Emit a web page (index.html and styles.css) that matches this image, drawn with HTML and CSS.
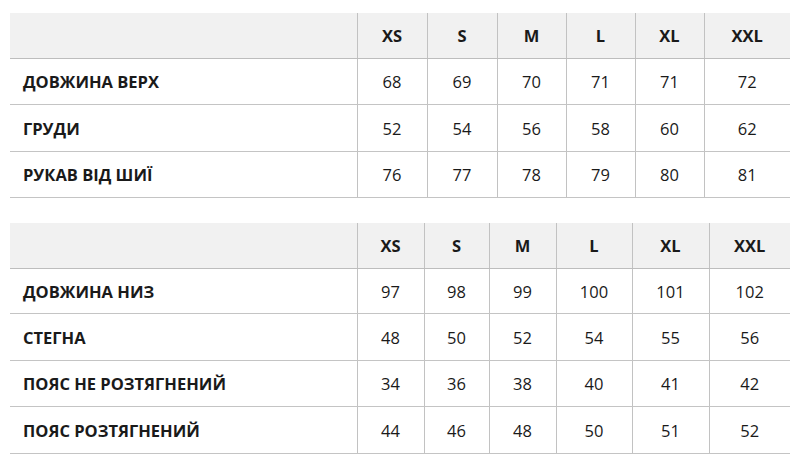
FILE: index.html
```html
<!DOCTYPE html>
<html lang="uk">
<head>
<meta charset="utf-8">
<title>Розмірна сітка</title>
<link rel="stylesheet" href="styles.css">
</head>
<body>
<div class="page">
  <table class="sizes sizes-top">
    <colgroup>
      <col class="c-label"><col class="c1"><col class="c2"><col class="c3"><col class="c4"><col class="c5"><col class="c6">
    </colgroup>
    <thead>
      <tr><th></th><th>XS</th><th>S</th><th>M</th><th>L</th><th>XL</th><th>XXL</th></tr>
    </thead>
    <tbody>
      <tr class="r-short"><td class="label">ДОВЖИНА ВЕРХ</td><td>68</td><td>69</td><td>70</td><td>71</td><td>71</td><td>72</td></tr>
      <tr class="r-tall"><td class="label">ГРУДИ</td><td>52</td><td>54</td><td>56</td><td>58</td><td>60</td><td>62</td></tr>
      <tr class="r-short"><td class="label">РУКАВ ВІД ШИЇ</td><td>76</td><td>77</td><td>78</td><td>79</td><td>80</td><td>81</td></tr>
    </tbody>
  </table>

  <table class="sizes sizes-bottom">
    <colgroup>
      <col class="c-label"><col class="c1"><col class="c2"><col class="c3"><col class="c4"><col class="c5"><col class="c6">
    </colgroup>
    <thead>
      <tr><th></th><th>XS</th><th>S</th><th>M</th><th>L</th><th>XL</th><th>XXL</th></tr>
    </thead>
    <tbody>
      <tr class="r-min"><td class="label">ДОВЖИНА НИЗ</td><td>97</td><td>98</td><td>99</td><td>100</td><td>101</td><td>102</td></tr>
      <tr class="r-tall"><td class="label">СТЕГНА</td><td>48</td><td>50</td><td>52</td><td>54</td><td>55</td><td>56</td></tr>
      <tr class="r-short"><td class="label">ПОЯС НЕ РОЗТЯГНЕНИЙ</td><td>34</td><td>36</td><td>38</td><td>40</td><td>41</td><td>42</td></tr>
      <tr class="r-tall"><td class="label">ПОЯС РОЗТЯГНЕНИЙ</td><td>44</td><td>46</td><td>48</td><td>50</td><td>51</td><td>52</td></tr>
    </tbody>
  </table>
</div>
</body>
</html>
```

FILE: styles.css
```css
html, body {
  margin: 0;
  padding: 0;
  background: #ffffff;
}

.page {
  padding: 13px 10px 0 10px;
  display: flex;
  flex-direction: column;
  gap: 25px;
  font-family: "Open Sans", "Noto Sans", "Liberation Sans", sans-serif;
  color: #1a1a1a;
}

.sizes {
  width: 780px;
  border-collapse: collapse;
  table-layout: fixed;
  font-size: 16.5px;
}

.c-label { width: 347px; }

.sizes-top .c1 { width: 70px; }
.sizes-top .c2 { width: 70px; }
.sizes-top .c3 { width: 69px; }
.sizes-top .c4 { width: 69px; }
.sizes-top .c5 { width: 69px; }
.sizes-top .c6 { width: 86px; }

.sizes-bottom .c1 { width: 67px; }
.sizes-bottom .c2 { width: 65px; }
.sizes-bottom .c3 { width: 67px; }
.sizes-bottom .c4 { width: 76px; }
.sizes-bottom .c5 { width: 77px; }
.sizes-bottom .c6 { width: 81px; }

.sizes thead tr {
  background: #f1f1f1;
}

.sizes th,
.sizes td {
  padding: 0;
  text-align: center;
  vertical-align: middle;
  border-left: 1px solid #c2c2c2;
}

.sizes th:first-child,
.sizes td:first-child {
  border-left: none;
}

.sizes th {
  height: 45px;
  font-weight: 700;
  border-bottom: 1px solid #bdbdbd;
}

.sizes td {
  height: 45px;
  font-weight: 400;
  border-bottom: 1px solid #c4c4c4;
}

.sizes .r-min td { height: 44px; }
.sizes .r-short td { height: 45px; }
.sizes .r-tall td { height: 46px; }

.sizes td.label {
  text-align: left;
  padding-left: 13px;
  font-weight: 700;
}
```
